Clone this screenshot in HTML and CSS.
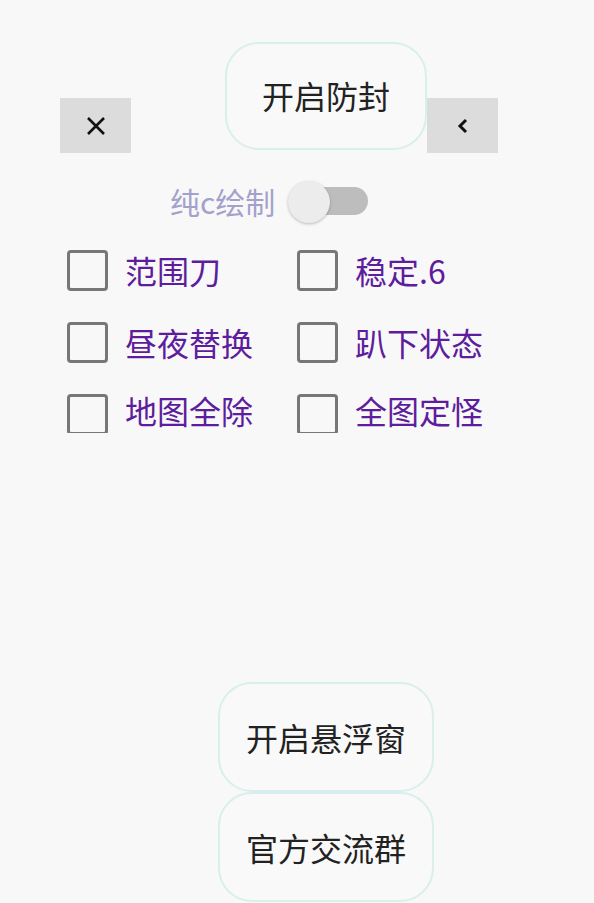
FILE: index.html
```html
<!DOCTYPE html>
<html lang="zh-CN">
  <head>
    <meta charset="UTF-8" />
    <meta name="viewport" content="width=device-width, initial-scale=1.0" />
    <title>防封面板</title>
    <link rel="stylesheet" href="styles.css">
  </head>
  <body>
    <div class="top-row">
      <button class="square-btn close-btn" aria-label="关闭">
        <svg width="22" height="22" viewBox="0 0 22 22">
          <path d="M3 3 L19 19 M19 3 L3 19" stroke="#111" stroke-width="2.6" fill="none" />
        </svg>
      </button>
      <button class="pill-btn main-btn">开启防封</button>
      <button class="square-btn back-btn" aria-label="收起">
        <svg width="14" height="18" viewBox="0 0 14 18">
          <path d="M10 3 L4 9 L10 15" stroke="#111" stroke-width="3" fill="none" />
        </svg>
      </button>
    </div>

    <div class="switch-row">
      <span class="switch-label">纯c绘制</span>
      <span class="switch">
        <span class="switch-track"></span>
        <span class="switch-thumb"></span>
      </span>
    </div>

    <div class="options">
      <label class="option"><span class="box"></span>范围刀</label>
      <label class="option"><span class="box"></span>稳定.6</label>
      <label class="option"><span class="box"></span>昼夜替换</label>
      <label class="option"><span class="box"></span>趴下状态</label>
      <label class="option"><span class="box"></span>地图全除</label>
      <label class="option"><span class="box"></span>全图定怪</label>
    </div>

    <div class="bottom">
      <button class="pill-btn big-btn">开启悬浮窗</button>
      <button class="pill-btn big-btn">官方交流群</button>
    </div>
  </body>
</html>
```

FILE: styles.css
```css
* {
  box-sizing: border-box;
  margin: 0;
  padding: 0;
  font-family: "Noto Sans CJK SC", "Noto Sans", sans-serif;
}

body {
  background: #f8f8f8;
  width: 594px;
  height: 903px;
  overflow: hidden;
}

button {
  border: none;
  cursor: pointer;
  font-family: inherit;
}

.top-row {
  display: flex;
  align-items: flex-end;
  padding: 42px 0 0 60px;
}

.square-btn {
  width: 71px;
  height: 55px;
  background: #dcdcdc;
  display: flex;
  align-items: center;
  justify-content: center;
}

.pill-btn {
  background: #f9f9f9;
  border: 2px solid #d8efec;
  border-radius: 34px;
  color: #222;
  font-size: 32px;
  line-height: 1.2;
}

.main-btn {
  width: 202px;
  height: 108px;
  margin: 0 0 3px 94px;
  padding-bottom: 2px;
}

.switch-row {
  display: flex;
  align-items: center;
  height: 44px;
  margin-top: 26px;
  padding-left: 170px;
}

.switch-label {
  color: #a3a1cc;
  font-size: 30px;
  line-height: 1.2;
}

.switch {
  position: relative;
  width: 80px;
  height: 42px;
  margin-left: 13px;
}

.switch-track {
  position: absolute;
  left: 14px;
  top: 7px;
  width: 66px;
  height: 28px;
  border-radius: 14px;
  background: #bdbdbd;
}

.switch-thumb {
  position: absolute;
  left: 0;
  top: 1px;
  width: 42px;
  height: 42px;
  border-radius: 50%;
  background: #ececec;
  box-shadow: 0 1px 3px rgba(0, 0, 0, 0.25);
}

.options {
  display: grid;
  grid-template-columns: 230px 230px;
  grid-auto-rows: 72px;
  height: 199px;
  margin-top: 11px;
  padding-left: 67px;
  overflow: hidden;
}

.option {
  display: flex;
  align-items: center;
  gap: 17px;
  color: #5e1d9c;
  font-size: 32px;
  line-height: 1;
}

.option:nth-child(n+5) {
  align-items: flex-start;
  padding-top: 16px;
}

.box {
  width: 41px;
  height: 41px;
  border: 3px solid #777;
  border-radius: 4px;
  flex-shrink: 0;
}

.bottom {
  display: flex;
  flex-direction: column;
  margin: 249px 0 0 218px;
}

.big-btn {
  width: 216px;
  height: 110px;
}
```
